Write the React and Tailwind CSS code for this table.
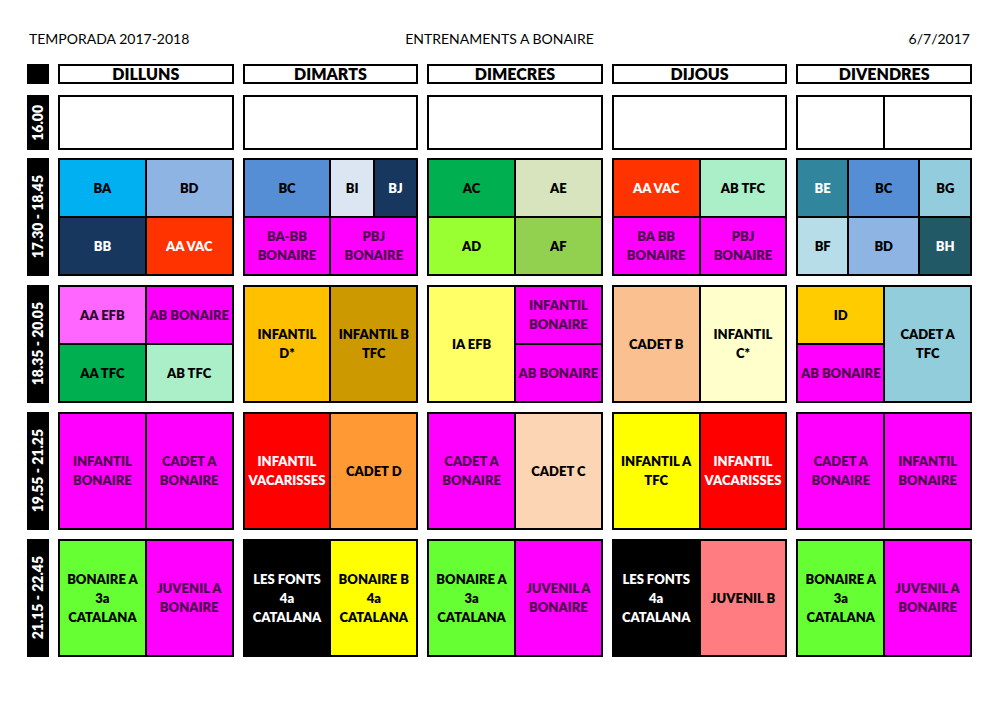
import React from "react";

const MAG = "bg-[#ff00ff] text-[#4a0a4a]";

function Sub({ t, c, s = "" }) {
  return (
    <div
      className={
        "flex items-center justify-center text-center font-extrabold text-[13px] leading-[19px] whitespace-pre " +
        c +
        " " +
        s
      }
    >
      {t}
    </div>
  );
}

function Box({ grid, items }) {
  return (
    <div className={"grid bg-black border-2 border-black gap-[2px] " + grid}>
      {items.map((it, i) => (
        <Sub key={i} {...it} />
      ))}
    </div>
  );
}

function TimeLabel({ t }) {
  return (
    <div className="bg-black text-white font-extrabold text-[14px] flex items-center justify-center">
      <span className="[writing-mode:vertical-rl] rotate-180 leading-none whitespace-nowrap">{t}</span>
    </div>
  );
}

const COLS = "grid grid-cols-[22px_repeat(5,1fr)] gap-x-[9px]";

const rows = [
  {
    time: "17.30 - 18.45",
    days: [
      {
        grid: "grid-cols-2 grid-rows-2",
        items: [
          { t: "BA", c: "bg-[#00b0f0] text-black" },
          { t: "BD", c: "bg-[#8eb4e3] text-black" },
          { t: "BB", c: "bg-[#17375e] text-white" },
          { t: "AA VAC", c: "bg-[#ff3300] text-white" },
        ],
      },
      {
        grid: "grid-cols-4 grid-rows-2",
        items: [
          { t: "BC", c: "bg-[#558ed5] text-black", s: "col-span-2" },
          { t: "BI", c: "bg-[#dce6f2] text-black" },
          { t: "BJ", c: "bg-[#17375e] text-white" },
          { t: "BA-BB\nBONAIRE", c: MAG, s: "col-span-2" },
          { t: "PBJ\nBONAIRE", c: MAG, s: "col-span-2" },
        ],
      },
      {
        grid: "grid-cols-2 grid-rows-2",
        items: [
          { t: "AC", c: "bg-[#00b050] text-black" },
          { t: "AE", c: "bg-[#d7e4bd] text-black" },
          { t: "AD", c: "bg-[#99ff33] text-black" },
          { t: "AF", c: "bg-[#92d050] text-black" },
        ],
      },
      {
        grid: "grid-cols-2 grid-rows-2",
        items: [
          { t: "AA VAC", c: "bg-[#ff3300] text-white" },
          { t: "AB TFC", c: "bg-[#abefc8] text-black" },
          { t: "BA BB\nBONAIRE", c: MAG },
          { t: "PBJ\nBONAIRE", c: MAG },
        ],
      },
      {
        grid: "grid-cols-[51fr_73fr_52fr] grid-rows-2",
        items: [
          { t: "BE", c: "bg-[#31859c] text-white" },
          { t: "BC", c: "bg-[#558ed5] text-black" },
          { t: "BG", c: "bg-[#93cddd] text-black" },
          { t: "BF", c: "bg-[#b7dee8] text-black" },
          { t: "BD", c: "bg-[#8eb4e3] text-black" },
          { t: "BH", c: "bg-[#215967] text-white" },
        ],
      },
    ],
  },
  {
    time: "18.35 - 20.05",
    days: [
      {
        grid: "grid-cols-2 grid-rows-2",
        items: [
          { t: "AA EFB", c: "bg-[#ff66ff] text-[#2a0a2a]" },
          { t: "AB BONAIRE", c: MAG },
          { t: "AA TFC", c: "bg-[#00b050] text-black" },
          { t: "AB TFC", c: "bg-[#abefc8] text-black" },
        ],
      },
      {
        grid: "grid-cols-2 grid-rows-1",
        items: [
          { t: "INFANTIL\nD*", c: "bg-[#ffc000] text-black" },
          { t: "INFANTIL B\nTFC", c: "bg-[#cc9900] text-black" },
        ],
      },
      {
        grid: "grid-cols-2 grid-rows-2",
        items: [
          { t: "IA EFB", c: "bg-[#ffff66] text-black", s: "row-span-2" },
          { t: "INFANTIL\nBONAIRE", c: MAG },
          { t: "AB BONAIRE", c: MAG },
        ],
      },
      {
        grid: "grid-cols-2 grid-rows-1",
        items: [
          { t: "CADET B", c: "bg-[#fac090] text-black" },
          { t: "INFANTIL\nC*", c: "bg-[#ffffcc] text-black" },
        ],
      },
      {
        grid: "grid-cols-2 grid-rows-2",
        items: [
          { t: "ID", c: "bg-[#ffcc00] text-black" },
          { t: "CADET A\nTFC", c: "bg-[#92cddc] text-black", s: "row-span-2" },
          { t: "AB BONAIRE", c: MAG },
        ],
      },
    ],
  },
  {
    time: "19.55 - 21.25",
    days: [
      {
        grid: "grid-cols-2 grid-rows-1",
        items: [
          { t: "INFANTIL\nBONAIRE", c: MAG },
          { t: "CADET A\nBONAIRE", c: MAG },
        ],
      },
      {
        grid: "grid-cols-2 grid-rows-1",
        items: [
          { t: "INFANTIL\nVACARISSES", c: "bg-[#ff0000] text-white" },
          { t: "CADET D", c: "bg-[#ff9933] text-black" },
        ],
      },
      {
        grid: "grid-cols-2 grid-rows-1",
        items: [
          { t: "CADET A\nBONAIRE", c: MAG },
          { t: "CADET C", c: "bg-[#fcd5b5] text-black" },
        ],
      },
      {
        grid: "grid-cols-2 grid-rows-1",
        items: [
          { t: "INFANTIL A\nTFC", c: "bg-[#ffff00] text-black" },
          { t: "INFANTIL\nVACARISSES", c: "bg-[#ff0000] text-white" },
        ],
      },
      {
        grid: "grid-cols-2 grid-rows-1",
        items: [
          { t: "CADET A\nBONAIRE", c: MAG },
          { t: "INFANTIL\nBONAIRE", c: MAG },
        ],
      },
    ],
  },
  {
    time: "21.15 - 22.45",
    days: [
      {
        grid: "grid-cols-2 grid-rows-1",
        items: [
          { t: "BONAIRE A\n3a\nCATALANA", c: "bg-[#66ff33] text-black" },
          { t: "JUVENIL A\nBONAIRE", c: MAG },
        ],
      },
      {
        grid: "grid-cols-2 grid-rows-1",
        items: [
          { t: "LES FONTS\n4a\nCATALANA", c: "bg-black text-white" },
          { t: "BONAIRE B\n4a\nCATALANA", c: "bg-[#ffff00] text-black" },
        ],
      },
      {
        grid: "grid-cols-2 grid-rows-1",
        items: [
          { t: "BONAIRE A\n3a\nCATALANA", c: "bg-[#66ff33] text-black" },
          { t: "JUVENIL A\nBONAIRE", c: MAG },
        ],
      },
      {
        grid: "grid-cols-2 grid-rows-1",
        items: [
          { t: "LES FONTS\n4a\nCATALANA", c: "bg-black text-white" },
          { t: "JUVENIL B", c: "bg-[#ff7c80] text-black" },
        ],
      },
      {
        grid: "grid-cols-2 grid-rows-1",
        items: [
          { t: "BONAIRE A\n3a\nCATALANA", c: "bg-[#66ff33] text-black" },
          { t: "JUVENIL A\nBONAIRE", c: MAG },
        ],
      },
    ],
  },
];

const DAYS = ["DILLUNS", "DIMARTS", "DIMECRES", "DIJOUS", "DIVENDRES"];

export default function App() {
  return (
    <div
      className="w-[1000px] h-[707px] bg-white text-black pl-[27px] pr-[28px] pt-[30px]"
      style={{ fontFamily: "Lato, 'Open Sans', sans-serif" }}
    >
      <div className="grid grid-cols-3 items-center text-[14px] leading-[18px] px-[2px]">
        <div>TEMPORADA 2017-2018</div>
        <div className="text-center">ENTRENAMENTS A BONAIRE</div>
        <div className="text-right">6/7/2017</div>
      </div>

      <div className={COLS + " h-[20px] mt-[16px]"}>
        <div className="bg-black" />
        {DAYS.map((d) => (
          <div
            key={d}
            className="border-2 border-black bg-white flex items-center justify-center font-extrabold text-[16px] leading-none"
          >
            {d}
          </div>
        ))}
      </div>

      <div className={COLS + " h-[55px] mt-[11px]"}>
        <TimeLabel t="16.00" />
        <div className="border-2 border-black bg-white" />
        <div className="border-2 border-black bg-white" />
        <div className="border-2 border-black bg-white" />
        <div className="border-2 border-black bg-white" />
        <div className="grid grid-cols-2 gap-[2px] bg-black border-2 border-black">
          <div className="bg-white" />
          <div className="bg-white" />
        </div>
      </div>

      {rows.map((r, i) => (
        <div key={i} className={COLS + " h-[118px] " + (i === 0 ? "mt-[8px]" : "mt-[9px]")}>
          <TimeLabel t={r.time} />
          {r.days.map((d, j) => (
            <Box key={j} grid={d.grid} items={d.items} />
          ))}
        </div>
      ))}
    </div>
  );
}
